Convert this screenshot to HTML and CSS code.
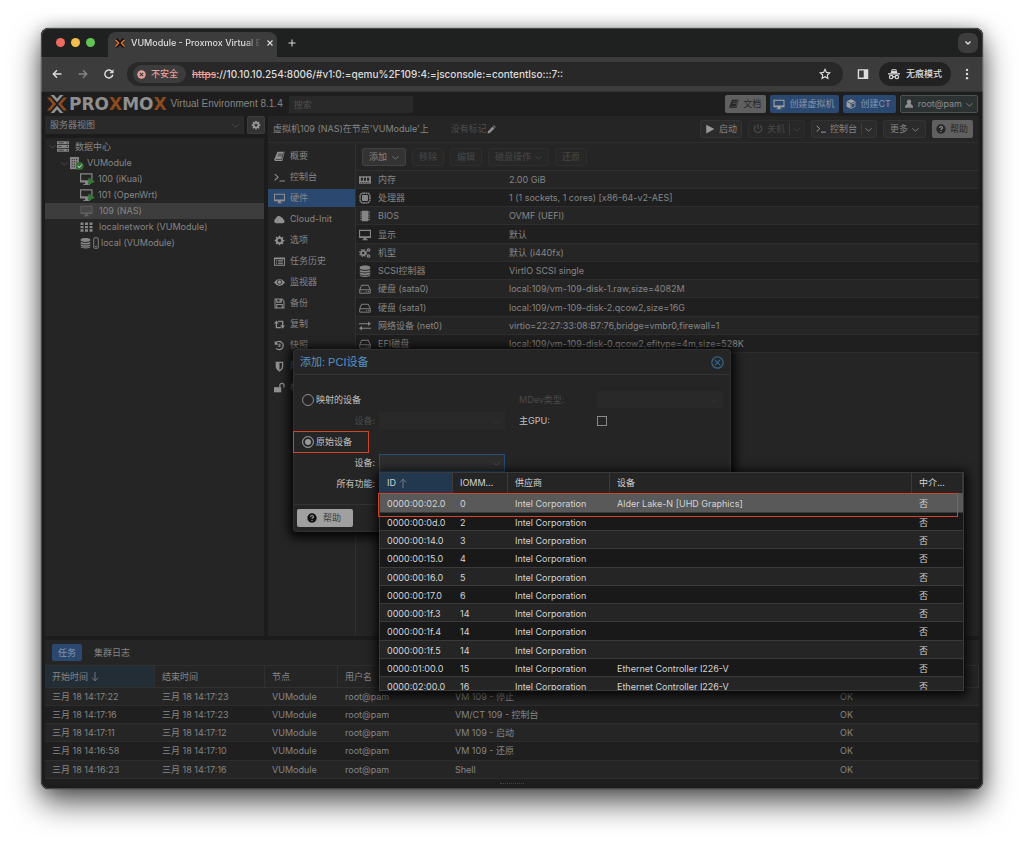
FILE: index.html
```html
<!DOCTYPE html>
<html lang="zh-CN">
<head>
<meta charset="utf-8">
<title>VUModule - Proxmox Virtual Environment</title>
<link rel="stylesheet" href="styles.css">
</head>
<body>
<svg class="sprite" aria-hidden="true">
  <symbol id="favicon" viewBox="0 0 16 16"><path d="M3 2.500 8 8l5-5.500M3 13.500 8 8l5 5.500" fill="none" stroke="#0b0b0b" stroke-width="3"/><path d="M1 3.500h2.500L7.500 8l-4 4.500H1L5 8zM15 3.500h-2.500L8.500 8l4 4.500H15L11 8z" fill="#e57024"/></symbol>
  <symbol id="logo" viewBox="0 0 20 18"><path d="M3.500 0H7l3 3.500L13 0h3.500L10 7.300zM3.500 18 10 10.700 16.500 18H13l-3-3.500L7 18z" fill="#8f8f8f"/><path d="M0 2.500h3.500L9 9l-5.500 6.500H0L5.500 9zM20 2.500h-3.500L11 9l5.500 6.500H20L14.500 9z" fill="#8d4a1f"/></symbol>
  <symbol id="back" viewBox="0 0 16 16"><path d="M14 8H3M8 3 3 8l5 5" fill="none" stroke="currentColor" stroke-width="1.800"/></symbol>
  <symbol id="forward" viewBox="0 0 16 16"><path d="M2 8h11M8 3l5 5-5 5" fill="none" stroke="currentColor" stroke-width="1.800"/></symbol>
  <symbol id="reload" viewBox="0 0 16 16"><path d="M13 9a5.300 5.300 0 1 1-1.500-4.800L13 5.500" fill="none" stroke="currentColor" stroke-width="1.900"/><path d="M14 1.500v5.500H8.500z" fill="currentColor"/></symbol>
  <symbol id="star" viewBox="0 0 16 16"><path d="m8 1.800 1.900 4.100 4.400.5-3.300 3 .9 4.400L8 11.600l-3.900 2.200.9-4.400-3.300-3 4.400-.5z" fill="none" stroke="currentColor" stroke-width="1.500"/></symbol>
  <symbol id="panel" viewBox="0 0 16 16"><path d="M1 1.500h14v13H1zM2.800 3.300v9.400H9V3.300z" fill="currentColor" fill-rule="evenodd"/></symbol>
  <symbol id="incognito" viewBox="0 0 16 16"><path d="M5 1.500h6l1.500 5H3.500zM0 7h16v1.700H0z" fill="currentColor"/><path d="M5.500 3.500h5" stroke="#222"/><g fill="none" stroke="currentColor" stroke-width="1.600"><circle cx="4.200" cy="12" r="2.300"/><circle cx="11.800" cy="12" r="2.300"/><path d="M6.500 12q1.500-1.200 3 0"/></g></symbol>
  <symbol id="dots" viewBox="0 0 16 16"><g fill="currentColor"><circle cx="8" cy="2.500" r="1.600"/><circle cx="8" cy="8" r="1.600"/><circle cx="8" cy="13.500" r="1.600"/></g></symbol>
  <symbol id="close" viewBox="0 0 16 16"><path d="m3 3 10 10M13 3 3 13" stroke="currentColor" stroke-width="2.200"/></symbol>
  <symbol id="plus" viewBox="0 0 16 16"><path d="M8 1v14M1 8h14" stroke="currentColor" stroke-width="2"/></symbol>
  <symbol id="danger" viewBox="0 0 16 16"><circle cx="8" cy="8" r="7.500" fill="currentColor"/><path d="m5 5 6 6M11 5l-6 6" stroke="#3c3c3c" stroke-width="2"/></symbol>
  <symbol id="chevron" viewBox="0 0 16 16"><path d="m1 5 7 7 7-7" fill="none" stroke="currentColor" stroke-width="1.800"/></symbol>
  <symbol id="chevron-bold" viewBox="0 0 16 16"><path d="m3 5 5 5 5-5" fill="none" stroke="currentColor" stroke-width="2.800"/></symbol>
  <symbol id="gear" viewBox="0 0 16 16"><path d="M7 1h2l.4 2 1.300.6 1.800-1.200 1.300 1.300-1.200 1.800.6 1.300 1.900.4v1.900l-2 .4-.5 1.300 1.200 1.700-1.400 1.400-1.700-1.200-1.300.5L9 15H7l-.4-1.900-1.300-.5-1.700 1.200-1.400-1.400 1.200-1.700-.5-1.300L1 9V7l1.900-.4.6-1.300-1.200-1.700 1.300-1.300 1.800 1.200L6.600 3zm1 4.500a2.500 2.500 0 1 0 0 5 2.500 2.500 0 0 0 0-5z" fill="currentColor" fill-rule="evenodd"/></symbol>
  <symbol id="gears" viewBox="0 0 16 16"><g fill="none" stroke="currentColor"><circle cx="5.500" cy="8" r="2.900" stroke-width="2.400"/><circle cx="5.500" cy="8" r="4.700" stroke-width="1.400" stroke-dasharray="2 1.700"/><circle cx="12.800" cy="4" r="1.600" stroke-width="1.700"/><circle cx="12.800" cy="12" r="1.600" stroke-width="1.700"/></g></symbol>
  <symbol id="server" viewBox="0 0 16 14"><path d="M0 0h16v4H0zM0 5h16v4H0zM0 10h16v4H0z" fill="currentColor"/><path d="M2 2h7M2 7h4M2 12h7" stroke="#252525" stroke-width=".9"/><path d="M13 2h1.500M13 7h1.500M13 12h1.500" stroke="#252525" stroke-width="1.300"/></symbol>
  <symbol id="node" viewBox="0 0 18 16"><path d="M1 0h11v15H1z" fill="currentColor"/><path d="M3 3h7M3 6h7M3 9h7M3 12h7" stroke="#252525" stroke-width="1" stroke-dasharray="1.500 1.200"/><circle cx="13" cy="11" r="4.800" fill="#346b36"/><path d="m10.500 11 2 2 3.200-3.800" fill="none" stroke="#b9c9b9" stroke-width="1.300"/></symbol>
  <symbol id="screen" viewBox="0 0 16 16"><path d="M0 1h16v11H10v2h2v1H4v-1h2v-2H0zM1.500 2.500v7h13v-7z" fill="currentColor" fill-rule="evenodd"/></symbol>
  <symbol id="screen-on" viewBox="0 0 18 15"><path d="M0 0h15v11H10v2h2v1H4v-1h2v-2H0zM1.500 1.500v7h12v-7z" fill="currentColor" fill-rule="evenodd"/><path d="m10 5 8 5-8 4.500z" fill="#2f7a33"/></symbol>
  <symbol id="screen-off" viewBox="0 0 16 16"><path d="M0 1h16v11H10v2h2v1H4v-1h2v-2H0z" fill="#606060"/><path d="M1 2h14v8H1z" fill="#484848"/></symbol>
  <symbol id="grid" viewBox="0 0 16 16"><path d="M0 2h4v3.300H0zM6 2h4v3.300H6zM12 2h4v3.300h-4zM0 6.500h4v3.300H0zM6 6.500h4v3.300H6zM12 6.500h4v3.300h-4zM0 11h4v3.300H0zM6 11h4v3.300H6zM12 11h4v3.300h-4z" fill="currentColor"/></symbol>
  <symbol id="db" viewBox="0 0 16 16"><path d="M1 3c0-3 14-3 14 0v1.500c0 2.500-14 2.500-14 0zM1 6.200c2 2 12 2 14 0v2c0 2.500-14 2.500-14 0zM1 9.700c2 2 12 2 14 0v2c0 2.500-14 2.500-14 0zM1 13c2 1.800 12 1.800 14 0v.8c0 2.800-14 2.800-14 0z" fill="currentColor"/></symbol>
  <symbol id="slot" viewBox="0 0 8 16"><rect x="1" y="1" width="6" height="14" rx="1.500" fill="none" stroke="currentColor" stroke-width="1.300"/><path d="M3 12.500h2" stroke="currentColor" stroke-width="1.500"/></symbol>
  <symbol id="book" viewBox="0 0 16 16"><path d="M5 1h10.500L12 14.500H2q-2-.5-1.500-2.500z" fill="currentColor"/><path d="M6 4.500h6.500M5.300 7h6.500M2.500 12.300h8.500L14 2" fill="none" stroke="#2a2a2a"/></symbol>
  <symbol id="book-dark" viewBox="0 0 16 16"><path d="M5 1h10.500L12 14.500H2q-2-.5-1.500-2.500z" fill="currentColor"/><path d="M6 4.500h6.500M5.300 7h6.500M2.500 12.300h8.500L14 2" fill="none" stroke="#606060"/></symbol>
  <symbol id="terminal" viewBox="0 0 16 16"><path d="m1 3 5 4.500L1 12M8 13h8" fill="none" stroke="currentColor" stroke-width="1.600"/></symbol>
  <symbol id="cloud" viewBox="0 0 16 16"><path d="M3.500 13.500a3.500 3.500 0 0 1-.8-6.800A4.500 4.500 0 0 1 11 5.200a2.300 2.300 0 0 1 2.300 2.500 3 3 0 0 1-.5 5.800z" fill="currentColor"/></symbol>
  <symbol id="list" viewBox="0 0 16 16"><path d="M0 2h16v12H0zM1.300 4.800v7.900h13.400V4.800z" fill="currentColor" fill-rule="evenodd"/><path d="M3 6.500h1.500M6 6.500h7M3 8.700h1.500M6 8.700h7M3 11h1.500M6 11h7" stroke="currentColor" stroke-width="1.200"/></symbol>
  <symbol id="eye" viewBox="0 0 16 16"><path d="M0 8q8-10 16 0-8 10-16 0z" fill="currentColor"/><circle cx="8" cy="7.500" r="3.200" fill="none" stroke="#252525" stroke-width="1.200"/></symbol>
  <symbol id="floppy" viewBox="0 0 16 16"><path d="M1.500 1.500h10l3 3v10h-13zM4 1.500v4.500h6.500V1.500M4 14.500V9.500h8v5" fill="none" stroke="currentColor" stroke-width="1.500"/><path d="M8 2h2v3H8z" fill="currentColor"/></symbol>
  <symbol id="retweet" viewBox="0 0 16 16"><path d="M3.500 5v7.500H10M6 3.500h6.500V11" fill="none" stroke="currentColor" stroke-width="2"/><path d="M3.500 2 7 6.500H0zM12.500 14 16 9.500H9z" fill="currentColor"/></symbol>
  <symbol id="history" viewBox="0 0 16 16"><path d="M3 4a6 6 0 1 1 0 8.200M8.500 5v4H6" fill="none" stroke="currentColor" stroke-width="1.800"/><path d="M1 1v6h6z" fill="currentColor"/></symbol>
  <symbol id="shield" viewBox="0 0 16 16"><path d="M2.500 1h11v7.500Q13 13 8 15.500 3 13 2.500 8.500zM8 3v10q3.500-2 3.500-4.500V3z" fill="currentColor" fill-rule="evenodd"/></symbol>
  <symbol id="unlock" viewBox="0 0 16 16"><path d="M0 7.500h10.500V15H0z" fill="currentColor"/><path d="M8.500 8V5a3 3 0 0 1 6 0v3" fill="none" stroke="currentColor" stroke-width="1.800"/></symbol>
  <symbol id="memory" viewBox="0 0 16 16"><path d="M0 3h16v3q-1 1 0 2v5H0V8q1-1 0-2z" fill="currentColor"/><path d="M2.500 5h2.800v4H2.500zM6.600 5h2.800v4H6.600zM10.700 5h2.800v4h-2.800z" fill="#252525"/><path d="M1.500 11.500h13" stroke="#252525" stroke-dasharray="1.500 1"/></symbol>
  <symbol id="cpu" viewBox="0 0 16 16"><rect x="1.500" y="1.500" width="13" height="13" rx="4" fill="none" stroke="currentColor" stroke-width="2" stroke-dasharray="2.500 .6"/><rect x="4" y="4" width="8" height="8" rx="1" fill="currentColor"/></symbol>
  <symbol id="chip" viewBox="0 0 16 16"><path d="M4 1h8v14H4z" fill="currentColor"/><path d="M2.800 2v12M13.200 2v12" stroke="currentColor" stroke-width="2" stroke-dasharray="1.500 1"/></symbol>
  <symbol id="hdd" viewBox="0 0 16 16"><path d="M1 9 3.500 3h9L15 9v4.500H1zM1 9h14" fill="none" stroke="currentColor" stroke-width="1.300" stroke-linejoin="round"/><path d="M9.500 11.300h1.300M12 11.300h1.300" stroke="currentColor" stroke-width="1.300"/></symbol>
  <symbol id="exchange" viewBox="0 0 16 16"><path d="M0 5h13M3 11h13" stroke="currentColor" stroke-width="1.600"/><path d="M12 2v6l4-3zM4 8v6l-4-3z" fill="currentColor"/></symbol>
  <symbol id="pencil" viewBox="0 0 16 16"><path d="m1 15 .8-4L10 2.700l3.300 3.300L5 14.200zM11 1.700l1.300-1.200 3.300 3.300-1.300 1.200z" fill="currentColor"/></symbol>
  <symbol id="play" viewBox="0 0 16 16"><path d="m2 1 13 7-13 7z" fill="currentColor"/></symbol>
  <symbol id="power" viewBox="0 0 16 16"><path d="M4.500 3a6 6 0 1 0 7 0M8 0v8" fill="none" stroke="currentColor" stroke-width="2"/></symbol>
  <symbol id="cube" viewBox="0 0 16 16"><path d="m8 .5 7 3.200v8.600L8 15.500l-7-3.200V3.700z" fill="currentColor"/><path d="m2 4.500 6 2.700 6-2.700M8 7.200v7" fill="none" stroke="#2b4970" stroke-width="1.300"/><path d="M9.500 8.500 13.500 6.700V11.400l-4 2z" fill="#2b4970"/></symbol>
  <symbol id="user" viewBox="0 0 16 16"><path d="M4.500 4.500a3.500 3.700 0 0 1 7 0Q11.500 7 10.300 8q4.200.8 4.200 6H1.500q0-5.200 4.200-6Q4.500 7 4.500 4.500z" fill="currentColor"/></symbol>
  <symbol id="help" viewBox="0 0 16 16"><circle cx="8" cy="8" r="7.500" fill="currentColor"/><path d="M5.700 6.300q0-2.300 2.300-2.300t2.300 2q0 1-1.200 1.700Q8 8.300 8 9.700M8 11v1.800" fill="none" stroke="#999" stroke-width="1.900"/></symbol>
  <symbol id="dismiss" viewBox="0 0 16 16"><circle cx="8" cy="8" r="7" fill="none" stroke="currentColor" stroke-width="1.500"/><path d="m4.700 4.700 6.600 6.600M11.300 4.700l-6.600 6.600" stroke="currentColor" stroke-width="1.500"/></symbol>
  <symbol id="arrow-up" viewBox="0 0 16 16"><path d="M8 16V2M3 7l5-5 5 5" fill="none" stroke="currentColor" stroke-width="1.300"/></symbol>
  <symbol id="arrow-down" viewBox="0 0 16 16"><path d="M8 0v14M3 9l5 5 5-5" fill="none" stroke="currentColor" stroke-width="1.300"/></symbol>
</svg>

<div class="window">
  <div class="tabstrip">
    <div class="lights"><i class="light red"></i><i class="light yellow"></i><i class="light green"></i></div>
    <div class="tab">
      <svg class="icon favicon"><use href="#favicon"/></svg>
      <span class="tab-title">VUModule - Proxmox Virtual E</span>
      <button class="plain" aria-label="关闭标签页"><svg class="icon small"><use href="#close"/></svg></button>
    </div>
    <button class="plain new-tab" aria-label="新标签页"><svg class="icon small"><use href="#plus"/></svg></button>
    <button class="plain tab-search" aria-label="搜索标签页"><svg class="icon small"><use href="#chevron-bold"/></svg></button>
  </div>

  <div class="browser-bar">
    <button class="plain" aria-label="后退"><svg class="icon nav"><use href="#back"/></svg></button>
    <button class="plain dim" aria-label="前进"><svg class="icon nav"><use href="#forward"/></svg></button>
    <button class="plain" aria-label="重新加载"><svg class="icon nav"><use href="#reload"/></svg></button>
    <div class="omnibox">
      <button class="security"><svg class="icon small"><use href="#danger"/></svg>不安全</button>
      <span class="scheme">https</span>
      <input class="url" aria-label="地址" value="://10.10.10.254:8006/#v1:0:=qemu%2F109:4:=jsconsole:=contentIso:::7::">
      <button class="plain" aria-label="收藏"><svg class="icon nav"><use href="#star"/></svg></button>
    </div>
    <button class="plain side" aria-label="侧边栏"><svg class="icon nav"><use href="#panel"/></svg></button>
    <button class="private"><svg class="icon nav"><use href="#incognito"/></svg>无痕模式</button>
    <button class="plain" aria-label="菜单"><svg class="icon nav"><use href="#dots"/></svg></button>
  </div>

  <div class="app">
    <header class="app-header">
      <svg class="logo"><use href="#logo"/></svg>
      <span class="wordmark">PRO<b>X</b>MO<b>X</b></span>
      <span class="version">Virtual Environment 8.1.4</span>
      <input class="search" aria-label="搜索" placeholder="搜索">
      <div class="actions">
        <button class="btn light-btn"><svg class="icon"><use href="#book-dark"/></svg>文档</button>
        <button class="btn blue"><svg class="icon wide"><use href="#screen"/></svg>创建虚拟机</button>
        <button class="btn blue"><svg class="icon"><use href="#cube"/></svg>创建CT</button>
        <button class="btn account"><svg class="icon"><use href="#user"/></svg>root@pam<svg class="icon caret"><use href="#chevron"/></svg></button>
      </div>
    </header>

    <div class="main">
      <aside class="sidebar">
        <div class="view-row">
          <div class="view-select">
            <select aria-label="视图"><option>服务器视图</option></select>
            <svg class="icon caret"><use href="#chevron"/></svg>
          </div>
          <button class="gear-btn" aria-label="设置"><svg class="icon"><use href="#gear"/></svg></button>
        </div>
        <ul class="tree">
          <li class="root"><svg class="icon caret"><use href="#chevron"/></svg><svg class="icon wide"><use href="#server"/></svg><span class="after">数据中心</span></li>
          <li class="node"><svg class="icon caret"><use href="#chevron"/></svg><svg class="icon vm"><use href="#node"/></svg>VUModule</li>
          <li><svg class="icon vm"><use href="#screen-on"/></svg>100 (iKuai)</li>
          <li><svg class="icon vm"><use href="#screen-on"/></svg>101 (OpenWrt)</li>
          <li class="selected"><svg class="icon off"><use href="#screen-off"/></svg>109 (NAS)</li>
          <li><svg class="icon off"><use href="#grid"/></svg>localnetwork (VUModule)</li>
          <li class="store"><svg class="icon tall"><use href="#db"/></svg><svg class="icon slot"><use href="#slot"/></svg>local (VUModule)</li>
        </ul>
      </aside>

      <section class="content">
        <div class="title-row">
          <h1>虚拟机109 (NAS)在节点'VUModule'上</h1>
          <span class="tags">没有标记<svg class="icon"><use href="#pencil"/></svg></span>
          <div class="vm-actions">
            <button class="btn dark"><svg class="icon"><use href="#play"/></svg>启动</button>
            <button class="btn dark faded" disabled><svg class="icon"><use href="#power"/></svg>关机<span class="split"><svg class="icon caret"><use href="#chevron"/></svg></span></button>
            <button class="btn dark"><svg class="icon"><use href="#terminal"/></svg>控制台<span class="split"><svg class="icon caret"><use href="#chevron"/></svg></span></button>
            <button class="btn dark more">更多<svg class="icon caret"><use href="#chevron"/></svg></button>
            <button class="btn light-btn"><svg class="icon"><use href="#help"/></svg>帮助</button>
          </div>
        </div>
        <div class="panes">
          <nav class="menu">
            <a href="#s"><svg class="icon"><use href="#book"/></svg>概要</a>
            <a href="#s"><svg class="icon"><use href="#terminal"/></svg>控制台</a>
            <a href="#s" class="current"><svg class="icon"><use href="#screen"/></svg>硬件</a>
            <a href="#s"><svg class="icon"><use href="#cloud"/></svg>Cloud-Init</a>
            <a href="#s"><svg class="icon"><use href="#gear"/></svg>选项</a>
            <a href="#s"><svg class="icon"><use href="#list"/></svg>任务历史</a>
            <a href="#s"><svg class="icon"><use href="#eye"/></svg>监视器</a>
            <a href="#s"><svg class="icon"><use href="#floppy"/></svg>备份</a>
            <a href="#s"><svg class="icon"><use href="#retweet"/></svg>复制</a>
            <a href="#s"><svg class="icon"><use href="#history"/></svg>快照</a>
            <a href="#s"><svg class="icon"><use href="#shield"/></svg>防火墙</a>
            <a href="#s"><svg class="icon"><use href="#unlock"/></svg>权限</a>
          </nav>
          <div class="hardware">
            <div class="hw-toolbar">
              <button class="btn raised">添加<svg class="icon caret"><use href="#chevron"/></svg></button>
              <button class="btn dark faded" disabled>移除</button>
              <button class="btn dark faded" disabled>编辑</button>
              <button class="btn dark faded" disabled>磁盘操作<svg class="icon caret"><use href="#chevron"/></svg></button>
              <button class="btn dark faded" disabled>还原</button>
            </div>
            <table class="grid hw">
              <colgroup><col class="c-icon"><col class="c-name"><col></colgroup>
              <tbody>
                <tr><td><svg class="icon"><use href="#memory"/></svg></td><td>内存</td><td>2.00 GiB</td></tr>
                <tr><td><svg class="icon"><use href="#cpu"/></svg></td><td>处理器</td><td>1 (1 sockets, 1 cores) [x86-64-v2-AES]</td></tr>
                <tr><td><svg class="icon"><use href="#chip"/></svg></td><td>BIOS</td><td>OVMF (UEFI)</td></tr>
                <tr><td><svg class="icon"><use href="#screen"/></svg></td><td>显示</td><td>默认</td></tr>
                <tr><td><svg class="icon"><use href="#gears"/></svg></td><td>机型</td><td>默认 (i440fx)</td></tr>
                <tr><td><svg class="icon"><use href="#db"/></svg></td><td>SCSI控制器</td><td>VirtIO SCSI single</td></tr>
                <tr><td><svg class="icon"><use href="#hdd"/></svg></td><td>硬盘 (sata0)</td><td>local:109/vm-109-disk-1.raw,size=4082M</td></tr>
                <tr><td><svg class="icon"><use href="#hdd"/></svg></td><td>硬盘 (sata1)</td><td>local:109/vm-109-disk-2.qcow2,size=16G</td></tr>
                <tr><td><svg class="icon"><use href="#exchange"/></svg></td><td>网络设备 (net0)</td><td>virtio=22:27:33:08:B7:76,bridge=vmbr0,firewall=1</td></tr>
                <tr><td><svg class="icon"><use href="#hdd"/></svg></td><td>EFI磁盘</td><td>local:109/vm-109-disk-0.qcow2,efitype=4m,size=528K</td></tr>
              </tbody>
            </table>
          </div>
        </div>
      </section>
    </div>

    <section class="log">
      <div class="log-tabs"><button class="log-tab active">任务</button><button class="log-tab">集群日志</button></div>
      <table class="grid tasks">
        <colgroup><col class="c-time"><col class="c-time"><col class="c-node"><col class="c-user"><col class="c-desc"><col></colgroup>
        <thead><tr><th class="sorted">开始时间<svg class="icon"><use href="#arrow-down"/></svg></th><th>结束时间</th><th>节点</th><th>用户名</th><th>描述</th><th>状态</th></tr></thead>
        <tbody>
          <tr><td>三月 18 14:17:22</td><td>三月 18 14:17:23</td><td>VUModule</td><td>root@pam</td><td>VM 109 - 停止</td><td>OK</td></tr>
          <tr><td>三月 18 14:17:16</td><td>三月 18 14:17:23</td><td>VUModule</td><td>root@pam</td><td>VM/CT 109 - 控制台</td><td>OK</td></tr>
          <tr><td>三月 18 14:17:11</td><td>三月 18 14:17:12</td><td>VUModule</td><td>root@pam</td><td>VM 109 - 启动</td><td>OK</td></tr>
          <tr><td>三月 18 14:16:58</td><td>三月 18 14:17:10</td><td>VUModule</td><td>root@pam</td><td>VM 109 - 还原</td><td>OK</td></tr>
          <tr><td>三月 18 14:16:23</td><td>三月 18 14:17:16</td><td>VUModule</td><td>root@pam</td><td>Shell</td><td>OK</td></tr>
        </tbody>
      </table>
      <div class="grip"></div>
    </section>
  </div>

  <div class="dialog" role="dialog" aria-labelledby="dialog-title">
    <div class="dialog-title"><h2 id="dialog-title">添加: PCI设备</h2><button class="plain dismiss" aria-label="关闭"><svg class="icon"><use href="#dismiss"/></svg></button></div>
    <div class="dialog-body">
      <div class="form-col">
        <label class="radio"><input type="radio" name="kind">映射的设备</label>
        <div class="field off"><label for="mapped">设备:</label><div class="combo"><select id="mapped" disabled></select><svg class="icon caret"><use href="#chevron"/></svg></div></div>
        <label class="radio"><input type="radio" name="kind" checked>原始设备<i class="mark"></i></label>
        <div class="field"><label for="raw">设备:</label>
          <div class="combo open"><input id="raw" role="combobox" aria-expanded="true"><svg class="icon caret"><use href="#chevron"/></svg>
            <div class="picker">
              <table class="grid devices">
                <colgroup><col class="d-id"><col class="d-group"><col class="d-vendor"><col><col class="d-mdev"></colgroup>
                <thead><tr><th class="sorted">ID<svg class="icon"><use href="#arrow-up"/></svg></th><th>IOMM…</th><th>供应商</th><th>设备</th><th>中介…</th></tr></thead>
                <tbody>
                  <tr class="picked"><td>0000:00:02.0</td><td>0</td><td>Intel Corporation</td><td>Alder Lake-N [UHD Graphics]</td><td>否</td></tr>
                  <tr><td>0000:00:0d.0</td><td>2</td><td>Intel Corporation</td><td></td><td>否</td></tr>
                  <tr><td>0000:00:14.0</td><td>3</td><td>Intel Corporation</td><td></td><td>否</td></tr>
                  <tr><td>0000:00:15.0</td><td>4</td><td>Intel Corporation</td><td></td><td>否</td></tr>
                  <tr><td>0000:00:16.0</td><td>5</td><td>Intel Corporation</td><td></td><td>否</td></tr>
                  <tr><td>0000:00:17.0</td><td>6</td><td>Intel Corporation</td><td></td><td>否</td></tr>
                  <tr><td>0000:00:1f.3</td><td>14</td><td>Intel Corporation</td><td></td><td>否</td></tr>
                  <tr><td>0000:00:1f.4</td><td>14</td><td>Intel Corporation</td><td></td><td>否</td></tr>
                  <tr><td>0000:00:1f.5</td><td>14</td><td>Intel Corporation</td><td></td><td>否</td></tr>
                  <tr><td>0000:01:00.0</td><td>15</td><td>Intel Corporation</td><td>Ethernet Controller I226-V</td><td>否</td></tr>
                  <tr><td>0000:02:00.0</td><td>16</td><td>Intel Corporation</td><td>Ethernet Controller I226-V</td><td>否</td></tr>
                </tbody>
              </table>
            </div>
            <i class="mark row-mark"></i>
          </div>
        </div>
        <div class="field"><label for="allfn">所有功能:</label><input type="checkbox" id="allfn"></div>
      </div>
      <div class="form-col second">
        <div class="field off"><label for="mdev">MDev类型:</label><div class="combo"><select id="mdev" disabled></select><svg class="icon caret"><use href="#chevron"/></svg></div></div>
        <div class="field"><label for="gpu">主GPU:</label><input type="checkbox" id="gpu"></div>
      </div>
    </div>
    <div class="dialog-foot"><button class="btn help-btn"><svg class="icon"><use href="#help"/></svg>帮助</button></div>
  </div>
</div>
</body>
</html>
```

FILE: styles.css
```css
* { box-sizing: border-box; }

:root {
  --ui: Inter, "Noto Sans CJK SC", sans-serif;
  --panel: #252525;
  --stripe: #1f1f1f;
  --line: #303030;
  --text: #858585;
  --blue: #2b4970;
}

body {
  margin: 0;
  min-height: 100vh;
  padding: 28px 41px 54px;
  display: flex;
  background: #fff;
  font-family: var(--ui);
  font-size: 9px;
  line-height: 12px;
  color: var(--text);
}

button, input, select { font: inherit; color: inherit; margin: 0; border: 0; outline: 0; }
button { cursor: pointer; }
h1, h2 { margin: 0; font-weight: 400; }
.sprite { display: none; }

.icon { width: 10px; height: 10px; flex: none; display: block; }
.icon.small { width: 8px; height: 8px; }
.icon.nav { width: 12px; height: 12px; }
.icon.caret { width: 7px; height: 7px; }
.icon.wide { width: 12px; height: 11px; }

.window {
  position: relative;
  flex: 1;
  min-width: 0;
  display: flex;
  flex-direction: column;
  border-radius: 8px;
  background: #1c1c1c;
  box-shadow: 0 0 1px #000, 0 14px 30px rgba(0, 0, 0, .65), 0 0 16px rgba(0, 0, 0, .25);
}
.window::after {
  content: "";
  position: absolute;
  inset: 0;
  border: 1px solid rgba(255, 255, 255, .2);
  border-radius: 8px;
  pointer-events: none;
}

.plain { background: none; padding: 0; display: flex; }
.dim { opacity: .45; }

/* browser frame */
.tabstrip {
  height: 29px;
  display: flex;
  align-items: center;
  background: #1f2121;
  border-radius: 8px 8px 0 0;
  color: #ddd;
  padding-right: 5px;
}
.lights { display: flex; gap: 6px; padding: 0 13px 0 15px; }
.light { width: 9px; height: 9px; border-radius: 50%; }
.red { background: #ed6a5e; }
.yellow { background: #f4bd4f; }
.green { background: #61c454; }
.tab {
  align-self: flex-end;
  height: 25px;
  width: 169px;
  display: flex;
  align-items: center;
  padding: 0 8px 4px 6px;
  gap: 5px;
  border-radius: 8px 8px 0 0;
  background: #3c3c3c;
}
.favicon { width: 12px; height: 12px; }
.tab-title {
  flex: 1;
  white-space: nowrap;
  font: 500 9px/14px Inter, sans-serif;
  mask-image: linear-gradient(90deg, #000 88%, transparent);
}
.new-tab { margin-left: 11px; }
.tab-search {
  margin-left: auto;
  width: 20px;
  height: 20px;
  border-radius: 7px;
  background: #3c3c3c;
  align-items: center;
  justify-content: center;
}

.browser-bar {
  height: 34px;
  display: flex;
  align-items: center;
  gap: 14px;
  padding: 0 10px 0 10px;
  background: #3c3c3c;
  color: #ddd;
}
.omnibox {
  flex: 1;
  height: 24px;
  display: flex;
  align-items: center;
  padding: 0 12px 0 6px;
  margin: 0 4px 0 -2px;
  border-radius: 12px;
  background: #282828;
  font: 500 10px/14px Inter, sans-serif;
}
.security, .private {
  display: flex;
  align-items: center;
  font: 500 9px/14px Inter, "Noto Sans CJK SC", sans-serif;
}
.security {
  height: 18px;
  gap: 5px;
  padding: 0 8px 0 4px;
  border-radius: 9px;
  background: #3c3c3c;
  color: #e8a09a;
}
.security .icon { width: 9px; height: 9px; }
.scheme { margin-left: 6px; color: #e8a09a; text-decoration: line-through; }
.url { flex: 1; min-width: 0; padding: 0; background: none; }
.side { margin: 0 -4px; }
.private {
  height: 24px;
  padding: 0 9px;
  gap: 6px;
  margin-right: -4px;
  border-radius: 12px;
  background: #222;
}

/* application */
.app {
  flex: 1;
  display: flex;
  flex-direction: column;
  padding: 0 4px 4px;
  border-top: 1px solid #333;
  border-radius: 0 0 8px 8px;
  background: #1c1c1c;
}
.app-header {
  height: 24px;
  display: flex;
  align-items: center;
  padding: 0 1px 0 2px;
  background: #1e1e1e;
}
.logo { width: 20px; height: 18px; flex: none; }
.wordmark { margin-left: 2px; font: 700 17px/18px "DejaVu Sans", sans-serif; color: #8f8f8f; }
.wordmark b { color: #8d4a1f; }
.version { margin-left: 4px; font: 10px/12px "Liberation Sans", sans-serif; }
.search { width: 124px; height: 17px; margin-left: 6px; padding: 0 5px; background: #292929; }
.search::placeholder { color: #4e4e4e; opacity: 1; }
.actions { margin-left: auto; display: flex; gap: 4px; }

.btn {
  height: 18px;
  display: flex;
  align-items: center;
  gap: 4px;
  padding: 0 5px;
  border-radius: 2px;
  white-space: nowrap;
}
.light-btn { background: #606060; color: #262626; padding: 0 5px 0 4px; }
.blue { background: var(--blue); color: #8497b0; padding: 0 5px 0 3px; }
.blue .icon { color: #a3a3a3; }
.account { border: 1px solid #4b5252; background: #2c3232; color: #8d8d8d; padding: 0 4px 0 3px; }
.dark { background: #2b2b2b; border: 1px solid #333; padding: 0 4px; }
.raised { background: #333; border: 1px solid #414141; padding: 0 6px; gap: 5px; }
.dark .icon { color: #999; }
.faded, .dark.faded .icon { color: #484848; }
.faded { background: #272727; border-color: #2d2d2d; }
.more { padding: 0 6px; }
.hw-toolbar .dark { padding: 0 6px; }
.split { border-left: 1px solid #3d3d3d; padding-left: 3px; height: 12px; display: flex; align-items: center; }

.main { flex: 1; display: flex; gap: 3px; min-height: 0; }
.sidebar { width: 220px; display: flex; flex-direction: column; gap: 4px; }
.view-row { display: flex; gap: 3px; }
.view-select { position: relative; flex: 1; }
.view-select select { appearance: none; width: 100%; height: 18px; padding: 0 5px; background: #2a2a2a; }
.view-select .caret, .combo > .caret { position: absolute; right: 5px; top: 6px; color: #555; pointer-events: none; }
.gear-btn {
  width: 18px;
  height: 18px;
  padding: 0;
  display: flex;
  align-items: center;
  justify-content: center;
  background: #333;
  border: 1px solid #3c3c3c;
  border-radius: 2px;
  color: #999;
}
.tree { flex: 1; margin: 0 1px 0 0; padding: 0; list-style: none; background: var(--panel); }
.tree li { height: 16px; display: flex; align-items: center; padding-left: 35px; }
.tree li.root { padding-left: 4px; height: 17px; }
.tree li.node { padding-left: 16px; }
.tree .caret { margin-right: 1px; color: #555; }
.tree .vm { width: 15px; height: 13px; margin-right: 3px; }
.tree .off { width: 13px; height: 12px; margin-right: 6px; }
.tree .tall { width: 11px; height: 12px; }
.tree .slot { width: 6px; height: 12px; margin: 0 2px; }
.after { margin-left: 6px; }
.selected { background: #3d3d3d; }

.content { flex: 1; min-width: 0; display: flex; flex-direction: column; background: var(--panel); }
.title-row { height: 27px; display: flex; align-items: center; padding: 0 6px 0 5px; border-bottom: 1px solid #2e2e2e; }
.title-row h1 { font-size: 9px; line-height: 12px; }
.tags { display: flex; align-items: center; margin-left: 22px; color: #4e4e4e; }
.tags .icon { color: #8f8f8f; width: 9px; height: 9px; }
.vm-actions { margin-left: auto; display: flex; gap: 6px; }

.panes { flex: 1; display: flex; }
.menu { width: 88px; padding-top: 4px; border-right: 1px solid var(--line); display: flex; flex-direction: column; gap: 3px; }
.menu a { height: 18px; display: flex; align-items: center; gap: 5px; padding-left: 6px; color: inherit; text-decoration: none; }
.menu .icon { width: 11px; height: 11px; color: #8f8f8f; }
.menu .current { background: var(--blue); }

.hardware { flex: 1; min-width: 0; }
.hw-toolbar { display: flex; gap: 6px; padding: 5px 5px 4px 6px; border-bottom: 1px solid var(--line); }

.grid { width: 100%; table-layout: fixed; border-collapse: separate; border-spacing: 0; }
.grid td { height: 18px; padding: 0 8px; line-height: 12px; border-bottom: 1px solid #2d2d2d; white-space: nowrap; background: var(--panel); }
.grid tr:nth-child(even) td { background: var(--stripe); }
.grid tr:nth-child(4n) td { height: 19px; }
.grid th { padding: 0 8px; font-weight: 400; text-align: left; white-space: nowrap; border: solid var(--line); border-width: 1px 1px 1px 0; }
.grid th .icon { display: inline-block; vertical-align: -2px; margin-left: 2px; }

.hw td { padding: 1px 0 0; }
.hw td:first-child { padding-left: 3px; }
.hw .icon { width: 12px; height: 12px; }
.c-icon { width: 22px; }
.c-name { width: 131px; }

.log { margin-top: 4px; background: var(--panel); }
.log-tabs { display: flex; gap: 6px; padding: 4px 7px; }
.log-tab { height: 17px; padding: 0 6px; border-radius: 2px; background: none; }
.active { background: var(--blue); color: #8497b0; }
.tasks td, .tasks th { padding: 0 7px; }
.tasks th { height: 23px; }
.tasks .sorted { background: #232d36; }
.c-time { width: 110px; }
.c-node { width: 73px; }
.c-user { width: 110px; }
.c-desc { width: 385px; }
.grip { height: 6px; background: #1e1e1e; }
.grip::after { content: ""; display: block; width: 24px; margin: auto; padding-top: 4px; border-bottom: 1px dotted #444; }

/* add-device dialog */
.dialog {
  position: absolute;
  left: 252px;
  top: 321px;
  width: 438px;
  background: var(--panel);
  border: 1px solid var(--line);
  border-radius: 3px;
  color: #c2c2c2;
  box-shadow: 0 2px 10px 4px rgba(0, 0, 0, .85);
}
.dialog-title { height: 25px; display: flex; align-items: center; justify-content: space-between; padding: 0 6px; border-bottom: 1px solid #333; }
.dialog-title h2 { font: 11px/14px "Liberation Sans", "Noto Sans CJK SC", sans-serif; color: #5391cd; }
.dismiss .icon { width: 13px; height: 13px; color: #34668d; }
.dialog-body { display: flex; padding: 16px 7px 11px 8px; border-bottom: 1px solid #333; }
.form-col { width: 203px; display: flex; flex-direction: column; gap: 3px; }
.second { margin-left: 14px; width: auto; flex: 1; }
.radio { position: relative; height: 18px; display: flex; align-items: center; gap: 2px; }
.radio input { appearance: none; width: 12px; height: 12px; border: 1px solid #8d8d8d; border-radius: 50%; }
.radio input:checked { background: #999; box-shadow: inset 0 0 0 2px var(--panel); }
.field { height: 18px; display: flex; align-items: center; gap: 4px; }
.field label { width: 73px; text-align: right; }
.second .field label { width: 74px; text-align: left; }
.field.off { color: #4a4a4a; }
.field.off .caret { color: #383838; }
.field input[type="checkbox"] { appearance: none; width: 10px; height: 10px; border: 1px solid #8a8a8a; }
.combo { position: relative; width: 126px; height: 18px; }
.combo select, .combo input { appearance: none; display: block; width: 100%; height: 17px; padding: 0 5px; background: #292929; opacity: 1; }
.combo.open input { height: 18px; border: 1px solid #264c78; background: #2e2e2e; }
.dialog-foot { padding: 4px 3px; }
.help-btn { background: #a0a0a0; color: #3a3a3a; padding: 0 12px 0 10px; gap: 6px; }
.help-btn .icon { color: #111; }

.picker {
  position: absolute;
  left: 0;
  top: 18px;
  z-index: 2;
  width: 585px;
  height: 219px;
  overflow: hidden;
  border: 1px solid #3a3a3a;
  background: var(--panel);
  color: #d4d4d4;
  box-shadow: 0 2px 10px 3px rgba(0, 0, 0, .85);
}
.devices td { padding: 2px 7px 0; border-color: #3a3a3a; }
.devices tr:nth-child(even) td { background: #191919; }
.devices tr.picked td { background: #595959; height: 20px; }
.devices th { height: 20px; padding: 0 7px; border-width: 0 1px 0 0; border-color: #3a3a3a; }
.devices .sorted { background: #22384f; }
.devices .sorted .icon { color: #888; }
.d-id { width: 73px; }
.d-group { width: 55px; }
.d-vendor { width: 102px; }
.d-mdev { width: 51px; }

.mark { position: absolute; z-index: 3; left: -9px; top: -2px; width: 76px; height: 22px; border: 1px solid #d0442b; pointer-events: none; }
.row-mark { left: -1px; top: 39px; width: 580px; height: 24px; }
```
